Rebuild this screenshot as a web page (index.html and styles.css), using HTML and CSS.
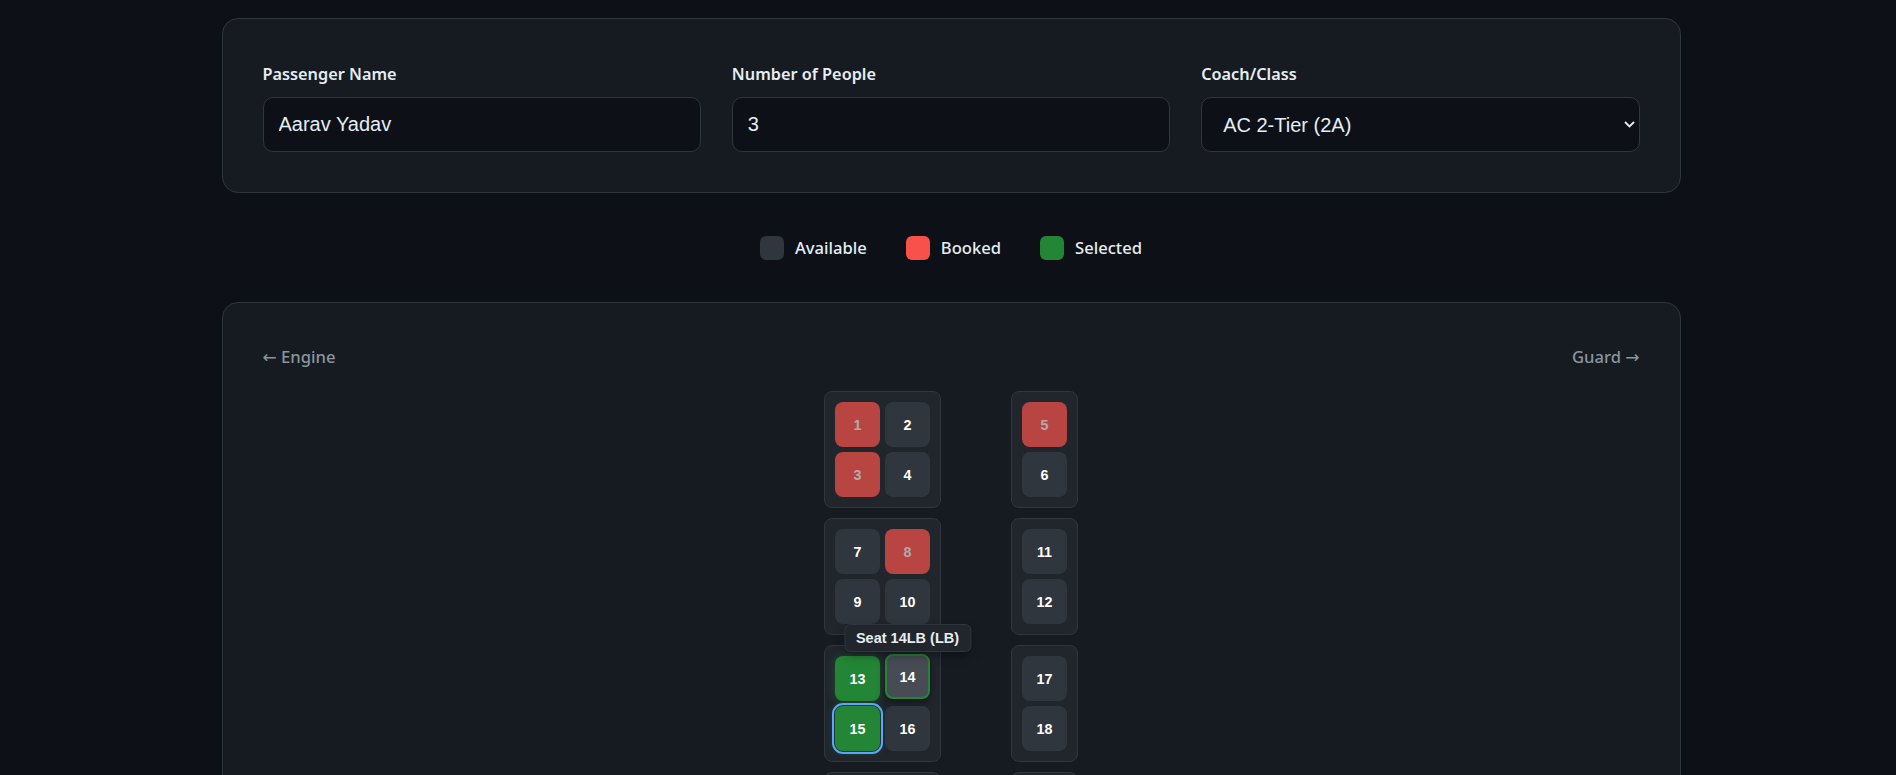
FILE: index.html
```html
<!DOCTYPE html>
<html lang="en">
<head>
<meta charset="utf-8">
<title>Seat Booking</title>
<link rel="stylesheet" href="styles.css">
</head>
<body>
<div class="page">
  <section class="card form-card">
    <div class="field">
      <label class="label" for="name">Passenger Name</label>
      <input class="control" id="name" type="text" value="Aarav Yadav">
    </div>
    <div class="field">
      <label class="label" for="people">Number of People</label>
      <input class="control" id="people" type="text" value="3">
    </div>
    <div class="field">
      <label class="label" for="coach">Coach/Class</label>
      <div class="select-wrap">
        <select class="control select" id="coach">
          <option>AC 2-Tier (2A)</option>
          <option>AC 3-Tier (3A)</option>
          <option>Sleeper (SL)</option>
        </select>
        <svg class="chevron" width="11" height="7" viewBox="0 0 11 7" aria-hidden="true"><polyline points="1,1 5.5,5.5 10,1" fill="none" stroke="#e6edf3" stroke-width="1.8"/></svg>
      </div>
    </div>
  </section>

  <div class="legend">
    <div class="legend-item"><span class="swatch swatch-available"></span>Available</div>
    <div class="legend-item"><span class="swatch swatch-booked"></span>Booked</div>
    <div class="legend-item"><span class="swatch swatch-selected"></span>Selected</div>
  </div>

  <section class="card map-card">
    <div class="ends"><span><span class="arrow">←</span> Engine</span><span>Guard <span class="arrow">→</span></span></div>
    <div class="coach">
      <div class="bay">
        <div class="group">
          <button class="seat booked">1</button>
          <button class="seat">2</button>
          <button class="seat booked">3</button>
          <button class="seat">4</button>
        </div>
        <div class="group single">
          <button class="seat booked">5</button>
          <button class="seat">6</button>
        </div>
      </div>
      <div class="bay">
        <div class="group">
          <button class="seat">7</button>
          <button class="seat booked">8</button>
          <button class="seat">9</button>
          <button class="seat">10</button>
        </div>
        <div class="group single">
          <button class="seat">11</button>
          <button class="seat">12</button>
        </div>
      </div>
      <div class="bay">
        <div class="group">
          <button class="seat selected">13</button>
          <button class="seat hovered">14<span class="tip">Seat 14LB (LB)</span></button>
          <button class="seat selected focused">15</button>
          <button class="seat">16</button>
        </div>
        <div class="group single">
          <button class="seat">17</button>
          <button class="seat">18</button>
        </div>
      </div>
      <div class="bay">
        <div class="group">
          <button class="seat">19</button>
          <button class="seat">20</button>
          <button class="seat">21</button>
          <button class="seat">22</button>
        </div>
        <div class="group single">
          <button class="seat">23</button>
          <button class="seat">24</button>
        </div>
      </div>
    </div>
  </section>
</div>
</body>
</html>
```

FILE: styles.css
```css
html {
  scrollbar-width: none;
}

body {
  margin: 0;
  background: #0d1117;
  color: #e6edf3;
  font-family: "Noto Sans", "Open Sans", sans-serif;
}

.page {
  width: 1459px;
  margin: 0 auto;
  padding: 18px 0 40px 6px;
}

.card {
  background: #161b22;
  border: 1px solid #30363d;
  border-radius: 16px;
  padding: 40px;
}

.form-card {
  display: grid;
  grid-template-columns: repeat(3, 1fr);
  gap: 31px;
}

.label {
  display: block;
  font-size: 16.3px;
  font-weight: 600;
  line-height: 24px;
  margin: 3px 0 11px;
  color: #e6edf3;
}

.control {
  display: block;
  width: 100%;
  box-sizing: border-box;
  height: 55px;
  margin: 0;
  padding: 0 15px;
  background: #0d1117;
  border: 1px solid #30363d;
  border-radius: 10px;
  color: #e6edf3;
  font-family: "Liberation Sans", Arial, sans-serif;
  font-size: 20px;
  outline: none;
}

.select-wrap {
  position: relative;
}

.select {
  appearance: none;
  -webkit-appearance: none;
  padding-left: 21px;
}

.chevron {
  position: absolute;
  right: 5px;
  top: 24px;
  pointer-events: none;
}

.legend {
  display: flex;
  justify-content: center;
  gap: 39px;
  height: 24px;
  margin: 43px 0 42px;
}

.legend-item {
  display: flex;
  align-items: center;
  gap: 11px;
  font-size: 16.6px;
  font-weight: 500;
  line-height: 24px;
}

.swatch {
  width: 24px;
  height: 24px;
  border-radius: 6px;
}

.swatch-available { background: #30363d; }
.swatch-booked { background: #f85149; }
.swatch-selected { background: #238636; }

.ends {
  display: flex;
  justify-content: space-between;
  align-items: center;
  height: 24px;
  color: #8b949e;
  font-size: 16.6px;
  font-weight: 500;
  line-height: 24px;
  margin: 2px 0 22px;
}

.arrow {
  font-family: "DejaVu Sans", sans-serif;
  font-size: 17px;
  font-weight: 400;
  line-height: 1;
}

.coach {
  display: flex;
  flex-direction: column;
  align-items: center;
  gap: 10px;
}

.bay {
  display: flex;
  gap: 70px;
}

.group {
  display: grid;
  grid-template-columns: repeat(2, 45px);
  gap: 5px;
  padding: 10px;
  background: #21262d;
  border: 1px solid #30363d;
  border-radius: 8px;
}

.group.single {
  grid-template-columns: 45px;
}

.seat {
  position: relative;
  width: 45px;
  height: 45px;
  box-sizing: border-box;
  margin: 0;
  padding: 0;
  border: none;
  border-radius: 8px;
  background: #30363d;
  color: #ffffff;
  font-family: "Liberation Sans", Arial, sans-serif;
  font-size: 14.3px;
  font-weight: 700;
  display: flex;
  align-items: center;
  justify-content: center;
}

.seat.booked {
  background: #b94542;
  color: #b3a9aa;
}

.seat.selected {
  background: #238636;
  box-shadow: 0 0 10px rgba(35, 134, 54, 0.4);
}

.seat.hovered {
  background: #474c54;
  border: 2px solid #238636;
  transform: translateY(-2px);
  box-shadow: 0 4px 10px rgba(0, 0, 0, 0.4);
}

.seat.focused {
  outline: 2px solid #58a6ff;
  outline-offset: 1px;
}

.tip {
  position: absolute;
  bottom: calc(100% + 4px);
  left: 50%;
  transform: translateX(-50%);
  z-index: 5;
  height: 28px;
  box-sizing: border-box;
  padding: 0 11px;
  line-height: 26px;
  white-space: nowrap;
  background: #21262d;
  border: 1px solid #30363d;
  border-radius: 6px;
  color: #e6edf3;
  font-family: "Liberation Sans", Arial, sans-serif;
  font-size: 14.5px;
  font-weight: 700;
  box-shadow: 0 4px 10px rgba(0, 0, 0, 0.35);
}
```
